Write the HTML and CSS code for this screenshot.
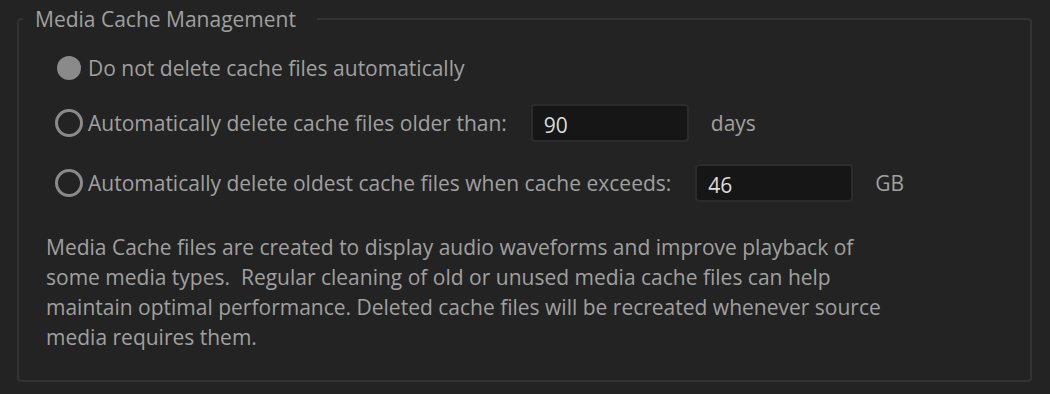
FILE: index.html
```html
<!DOCTYPE html>
<html lang="en">
<head>
    <meta charset="UTF-8">
    <meta name="viewport" content="width=device-width, initial-scale=1.0">
    <title>Media Cache</title>
    <link rel="stylesheet" href="styles.css">
</head>
<body>

<fieldset class="cache-box">
    <legend>Media Cache Management</legend>

    <div class="option option-first">
        <span class="radio checked"></span>
        <span class="label">Do not delete cache files automatically</span>
    </div>

    <div class="option">
        <span class="radio"></span>
        <span class="label">Automatically delete cache files older than:</span>
        <input class="field" type="text" value="90">
        <span class="unit">days</span>
    </div>

    <div class="option">
        <span class="radio"></span>
        <span class="label">Automatically delete oldest cache files when cache exceeds:</span>
        <input class="field" type="text" value="46">
        <span class="unit">GB</span>
    </div>

    <p class="note">Media Cache files are created to display audio waveforms and improve playback of<br>
    some media types.&nbsp; Regular cleaning of old or unused media cache files can help<br>
    maintain optimal performance. Deleted cache files will be recreated whenever source<br>
    media requires them.</p>
</fieldset>

</body>
</html>
```

FILE: styles.css
```css
body {
    margin: 0;
    padding: 8px 18px 0 17px;
    background-color: #232323;
    font-family: "Open Sans", sans-serif;
    font-size: 21px;
    color: #a0a0a0;
}
.cache-box {
    margin: 0;
    height: 374px;
    box-sizing: border-box;
    border: 2px solid #333;
    border-radius: 4px;
    padding: 0 0 0 27px;
}
.cache-box legend {
    padding: 0 21px 0 12px;
    margin-left: -23px;
    line-height: 22px;
}
.option {
    display: flex;
    align-items: center;
    height: 38px;
    margin-left: 9px;
    margin-bottom: 22px;
}
.option-first {
    margin-top: 19px;
    margin-bottom: 17px;
}
.radio {
    width: 22px;
    height: 22px;
    border: 3px solid #8a8a8a;
    border-radius: 50%;
    margin-right: 5px;
}
.radio.checked {
    width: 24px;
    height: 24px;
    border: none;
    background-color: #8a8a8a;
    margin: 0 7px 0 2px;
}
.field {
    width: 158px;
    height: 38px;
    box-sizing: border-box;
    margin-left: 24px;
    padding: 4px 11px 0;
    background-color: #161616;
    border: 2px solid #2c2c2c;
    border-radius: 4px;
    color: #dcdcdc;
    font-family: inherit;
    font-size: 21px;
}
.unit {
    margin-left: 22px;
}
.note {
    margin: 30px 0 0;
    line-height: 30px;
}
```
